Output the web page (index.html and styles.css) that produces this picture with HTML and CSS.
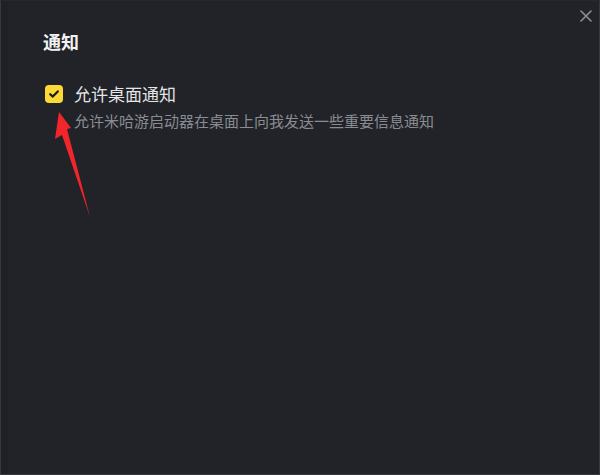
FILE: index.html
```html
<!DOCTYPE html>
<html lang="zh">
<head>
<meta charset="utf-8">
<link rel="stylesheet" href="styles.css">
</head>
<body>
<div class="window">
  <div class="strip"></div>
  <div class="panel">
    <h1 class="title">通知</h1>
    <div class="option">
      <span class="checkbox">
        <svg width="12" height="12" viewBox="0 0 12 12"><path d="M2.2 6.2 L4.8 8.6 L9.8 3.4" fill="none" stroke="#1a1a1a" stroke-width="2.2" stroke-linecap="round" stroke-linejoin="round"/></svg>
      </span>
      <span class="label">允许桌面通知</span>
    </div>
    <p class="desc">允许米哈游启动器在桌面上向我发送一些重要信息通知</p>
  </div>
  <svg class="close" width="12" height="12" viewBox="0 0 12 12"><path d="M1 1 L11 11 M11 1 L1 11" stroke="#8e9094" stroke-width="1.6" stroke-linecap="round"/></svg>
  <svg class="arrow" width="600" height="475" viewBox="0 0 600 475"><polygon points="59,112 71,128 67,129 90,217 62,135 55,139" fill="#f0262a"/></svg>
</div>
</body>
</html>
```
FILE: styles.css
```css
html, body {
  margin: 0;
  padding: 0;
  background: #212329;
}
.window {
  position: relative;
  width: 600px;
  height: 475px;
  box-sizing: border-box;
  border: 1px solid #36383d;
  border-top-color: #26282d;
  display: flex;
  background: #212329;
  font-family: "Noto Sans CJK SC", "Noto Sans", sans-serif;
  overflow: hidden;
}
.strip {
  width: 7px;
  background: #1e2024;
  flex: none;
}
.panel {
  flex: 1;
  padding: 27px 0 0 35px;
}
.title {
  margin: 0;
  font-size: 18px;
  line-height: 26px;
  font-weight: 700;
  color: #f2f2f2;
}
.option {
  display: flex;
  align-items: center;
  margin-top: 28px;
  margin-left: 2px;
  gap: 11px;
}
.checkbox {
  width: 18px;
  height: 18px;
  border-radius: 4px;
  background: #fcd935;
  display: flex;
  align-items: center;
  justify-content: center;
}
.label {
  font-size: 17px;
  line-height: 24px;
  color: #e4e5e7;
}
.desc {
  margin: 4px 0 0 31px;
  font-size: 15px;
  line-height: 22px;
  color: #8a8c91;
}
.close {
  position: absolute;
  right: 7px;
  top: 9px;
}
.arrow {
  position: absolute;
  left: -1px;
  top: -1px;
  pointer-events: none;
}
```
